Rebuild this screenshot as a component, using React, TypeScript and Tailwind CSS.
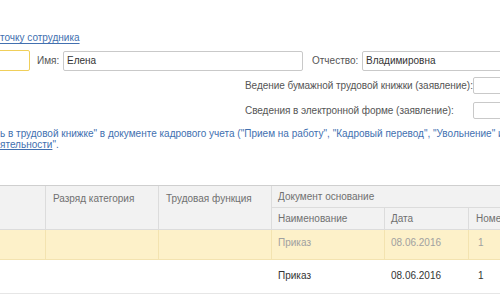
import React from "react";

const font = { fontFamily: '"Liberation Sans", Arial, sans-serif' };

export default function App() {
  return (
    <div className="w-[500px] h-[300px] overflow-hidden bg-white relative text-[10px] text-[#444]" style={font}>
      {/* link */}
      <div className="h-[31px]" />
      <div className="h-[14px] leading-[14px] flex items-center">
        <span className="text-[#4270b0] underline underline-offset-2 decoration-[#4270b0] whitespace-nowrap">точку сотрудника</span>
      </div>
      <div className="h-[5px]" />
      {/* name row */}
      <div className="h-[21px] flex items-center whitespace-nowrap">
        <div className="ml-[-10px] w-[40px] h-[21px] border border-[#f0cf5a] rounded-[2px] bg-white shrink-0" />
        <span className="ml-[7px] w-[26px] shrink-0 text-[#555]">Имя:</span>
        <div className="w-[240px] h-[20px] border border-[#c9c9c9] rounded-[2px] flex items-center px-[3px] text-[#333] shrink-0">Елена</div>
        <span className="ml-[9px] w-[50px] shrink-0 text-[#555]">Отчество:</span>
        <div className="w-[160px] h-[20px] border border-[#c9c9c9] rounded-[2px] flex items-center px-[3px] text-[#333] shrink-0">Владимировна</div>
      </div>
      <div className="h-[6px]" />
      <div className="h-[17px] flex items-center whitespace-nowrap pl-[245px]">
        <span className="w-[228px] shrink-0 text-[#555] tracking-[-0.05px]">Ведение бумажной трудовой книжки (заявление):</span>
        <div className="w-[40px] h-[17px] border border-[#c9c9c9] rounded-[2px] shrink-0" />
      </div>
      <div className="h-[8px]" />
      <div className="h-[17px] flex items-center whitespace-nowrap pl-[245px]">
        <span className="w-[228px] shrink-0 text-[#555] tracking-[-0.05px]">Сведения в электронной форме (заявление):</span>
        <div className="w-[40px] h-[17px] border border-[#c9c9c9] rounded-[2px] shrink-0" />
      </div>
      <div className="h-[9px]" />
      <div className="text-[#4270b0] leading-[11px] whitespace-nowrap">
        <div>ь в трудовой книжке" в документе кадрового учета ("Прием на работу", "Кадровый перевод", "Увольнение" и</div>
        <div><span className="underline decoration-[#4270b0]">ятельности</span>".</div>
      </div>
      <div className="h-[35px]" />
      {/* table */}
      <div className="grid grid-cols-[46px_113px_113px_113px_84px_1fr] border-t border-[#cfcfcf] text-[#707070]">
        <div className="row-span-2 bg-[#f2f2f2] border-r border-b border-[#dcdcdc]" />
        <div className="row-span-2 bg-[#f2f2f2] border-r border-b border-[#dcdcdc] pl-[7px] pt-[5px]">Разряд категория</div>
        <div className="row-span-2 bg-[#f2f2f2] border-r border-b border-[#dcdcdc] pl-[7px] pt-[5px]">Трудовая функция</div>
        <div className="col-span-3 h-[22px] bg-[#f2f2f2] border-b border-[#dcdcdc] pl-[6px] flex items-center">Документ основание</div>
        <div className="h-[22px] bg-[#f2f2f2] border-r border-b border-[#dcdcdc] pl-[6px] flex items-center">Наименование</div>
        <div className="h-[22px] bg-[#f2f2f2] border-r border-b border-[#dcdcdc] pl-[6px] flex items-center">Дата</div>
        <div className="h-[22px] bg-[#f2f2f2] border-b border-[#dcdcdc] pl-[7px] flex items-center whitespace-nowrap">Номер</div>

        <div className="h-[30px] bg-[#fdf1c9] border-r border-b border-[#f3e3b0]" />
        <div className="h-[30px] bg-[#fdf1c9] border-r border-b border-[#f3e3b0]" />
        <div className="h-[30px] bg-[#fdf1c9] border-r border-b border-[#f3e3b0]" />
        <div className="h-[30px] bg-[#fdf1c9] border-r border-b border-[#f3e3b0] pl-[6px] pt-[5px] text-[#a0a0a0]">Приказ</div>
        <div className="h-[30px] bg-[#fdf1c9] border-r border-b border-[#f3e3b0] pl-[6px] pt-[5px] text-[#a0a0a0]">08.06.2016</div>
        <div className="h-[30px] bg-[#fdf1c9] border-b border-[#f3e3b0] pl-[9px] pt-[5px] text-[#a0a0a0]">1</div>

        <div className="h-[34px] border-b border-[#e6e6e6]" />
        <div className="h-[34px] border-b border-[#e6e6e6]" />
        <div className="h-[34px] border-b border-[#e6e6e6]" />
        <div className="h-[34px] border-b border-[#e6e6e6] pl-[6px] pt-[8px] text-[#333]">Приказ</div>
        <div className="h-[34px] border-b border-[#e6e6e6] pl-[6px] pt-[8px] text-[#333]">08.06.2016</div>
        <div className="h-[34px] border-b border-[#e6e6e6] pl-[9px] pt-[8px] text-[#333]">1</div>
      </div>
    </div>
  );
}
